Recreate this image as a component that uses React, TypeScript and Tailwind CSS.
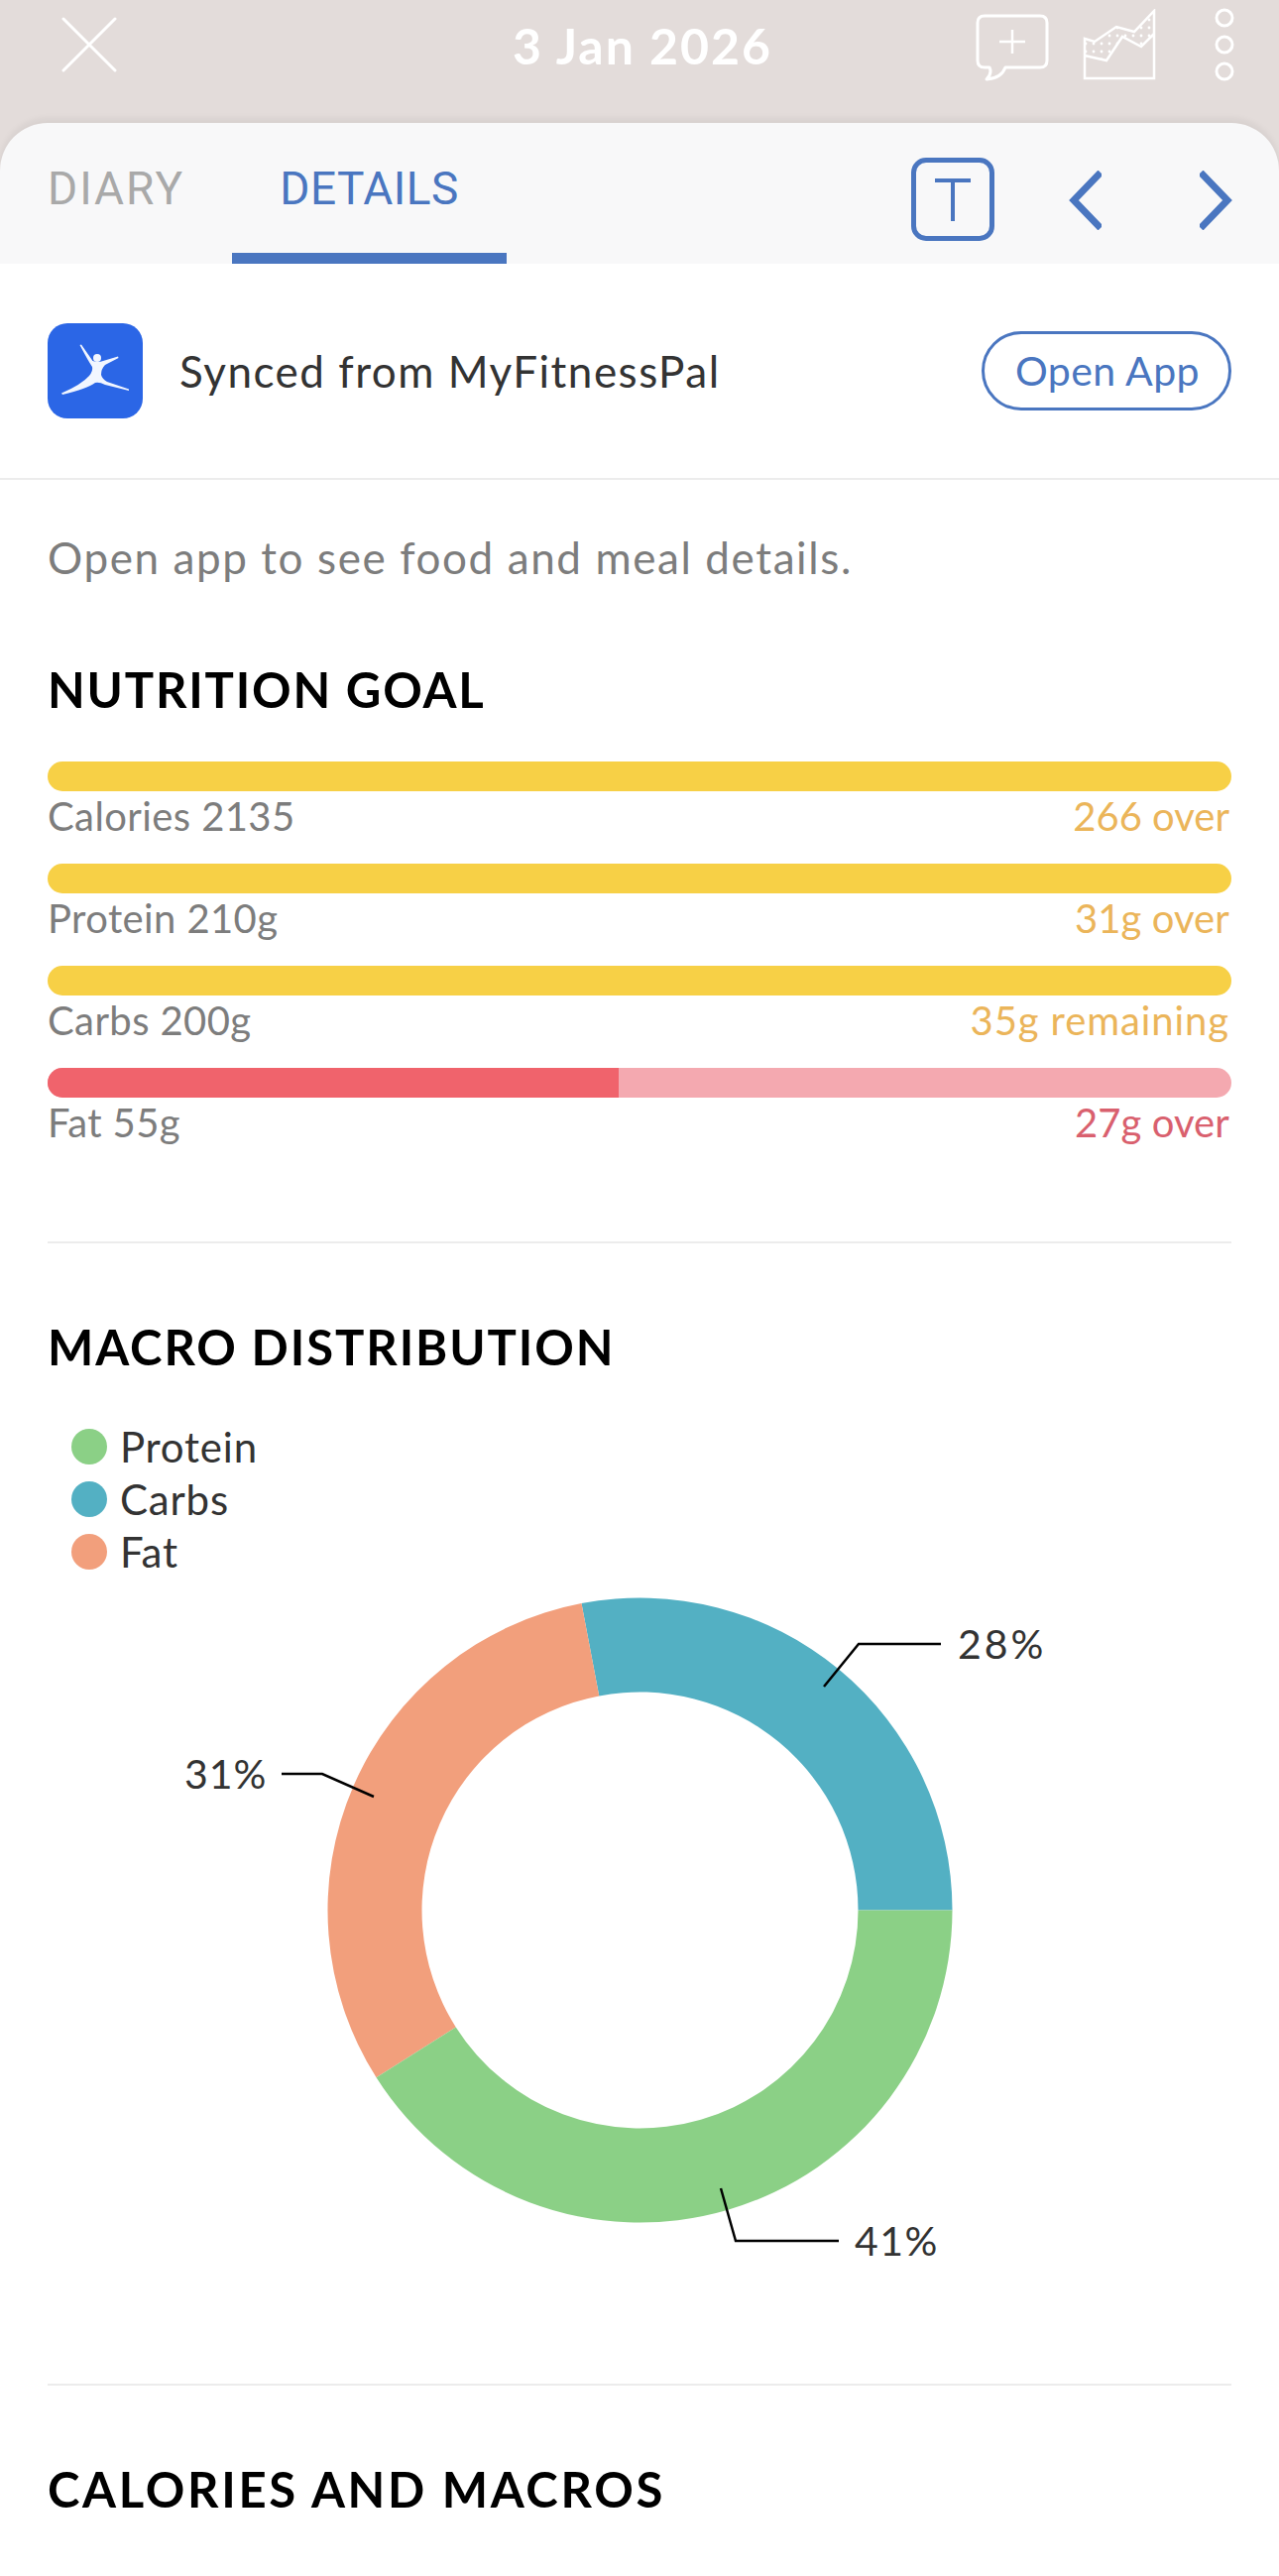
import React from 'react';

const sans = "font-['Lato','Liberation_Sans',sans-serif]";

const goals = [
  { label: 'Calories 2135', note: '266 over', tone: 'text-[#ebb55a] tracking-[0px]', fill: 'bg-[#f7d046]', width: '100%' },
  { label: 'Protein 210g', note: '31g over', tone: 'text-[#ebb55a] tracking-[0.1px]', fill: 'bg-[#f7d046]', width: '100%' },
  { label: 'Carbs 200g', note: '35g remaining', tone: 'text-[#ebb55a] tracking-[0.9px]', fill: 'bg-[#f7d046]', width: '100%' },
  { label: 'Fat 55g', note: '27g over', tone: 'text-[#d9606e] tracking-[0.1px]', fill: 'bg-[#f0636c]', width: '48.2%' },
];

const legend = [
  { label: 'Protein', color: 'bg-[#8bd086]' },
  { label: 'Carbs', color: 'bg-[#53b0c3]' },
  { label: 'Fat', color: 'bg-[#f29f7c]' },
];

// donut slice between two angles, measured counter-clockwise from east
function slice(from: number, to: number) {
  const cx = 645.5;
  const cy = 1926.5;
  const R = 315;
  const r = 220;
  const pt = (rad: number, deg: number) => {
    const a = (deg * Math.PI) / 180;
    return `${(cx + rad * Math.cos(a)).toFixed(2)} ${(cy - rad * Math.sin(a)).toFixed(2)}`;
  };
  const large = to - from > 180 ? 1 : 0;
  return `M${pt(R, from)} A${R} ${R} 0 ${large} 0 ${pt(R, to)} L${pt(r, to)} A${r} ${r} 0 ${large} 1 ${pt(r, from)} Z`;
}

function TopBar() {
  return (
    <div className="flex h-[124px] items-start justify-between bg-[#e3dcda] pl-[62px] pr-[45px]">
      <svg width="56" height="56" viewBox="0 0 56 56" className="mt-[17px]" stroke="#fff" strokeWidth="3" strokeLinecap="round">
        <path d="M2 2 L54 54 M54 2 L2 54" />
      </svg>
      <div className="mt-[16px] ml-[194px] text-[50px] leading-[60px] font-bold tracking-[2px] text-white">3 Jan 2026</div>
      <div className="flex items-start">
        <svg width="74" height="68" viewBox="0 0 74 68" className="mt-[14px]" fill="none" stroke="#fff" strokeWidth="3" strokeLinejoin="round">
          <path d="M9 2 H65 Q72 2 72 9 V47 Q72 54 65 54 H30 Q26 65 11 66 Q17 60 14 54 H9 Q2 54 2 47 V9 Q2 2 9 2 Z" />
          <path d="M37 16 V40 M24 28 H50" strokeWidth="2.5" />
        </svg>
        <svg width="74" height="72" viewBox="0 0 74 72" className="mt-[9px] ml-[34px]" fill="none">
          <defs>
            <pattern id="dots" width="8" height="8" patternUnits="userSpaceOnUse">
              <circle cx="3" cy="3" r="1.4" fill="#fff" />
            </pattern>
          </defs>
          <path d="M2 30 L12 33 L34 18 L52 23 L72 1 V25 L59 38 L40 28 L24 52 L2 47 Z" fill="url(#dots)" />
          <path d="M2 30 L12 33 L34 18 L52 23 L72 2 V70 H2 Z M2 47 L24 52 L40 28 L59 38 L72 25" stroke="#fff" strokeWidth="2.5" />
        </svg>
        <svg width="20" height="74" viewBox="0 0 20 74" className="mt-[8px] ml-[59px]" fill="none" stroke="#fff" strokeWidth="3">
          <circle cx="10" cy="10" r="8" />
          <circle cx="10" cy="37" r="8" />
          <circle cx="10" cy="64" r="8" />
        </svg>
      </div>
    </div>
  );
}

function TabBar() {
  return (
    <div className="bg-[#e3dcda]">
      <div className="flex h-[142px] items-start rounded-t-[48px] bg-[#f8f8f9] shadow-[0_-5px_6px_rgba(0,0,0,0.05)]">
        <div className="mt-[40px] ml-[48px] w-[137px] font-['Roboto',sans-serif] text-[46px] leading-[52px] font-normal tracking-[2px] text-[#a9a9a9]">DIARY</div>
        <div className="ml-[49px] flex h-[142px] w-[277px] flex-col items-center justify-between">
          <div className="mt-[40px] font-['Roboto',sans-serif] text-[46px] leading-[52px] font-normal tracking-[0.5px] text-[#4a76c0]">DETAILS</div>
          <div className="h-[11px] w-full bg-[#4a76c0]" />
        </div>
        <div className="mt-[35px] ml-auto flex items-start pr-[46px]">
          <div className="flex h-[84px] w-[84px] items-center justify-center rounded-[15px] border-[5px] border-[#4a76c0]">
            <svg width="36" height="44" viewBox="0 0 36 44" fill="none" stroke="#4a76c0" strokeWidth="4">
              <path d="M0 3 H36 M18 3 V44" />
            </svg>
          </div>
          <svg width="34" height="60" viewBox="0 0 34 60" className="mt-[13px] ml-[74px]" fill="none" stroke="#4a76c0" strokeWidth="7">
            <path d="M33 2 L6 30 L33 58" strokeLinecap="butt" />
          </svg>
          <svg width="34" height="60" viewBox="0 0 34 60" className="mt-[13px] ml-[99px]" fill="none" stroke="#4a76c0" strokeWidth="7">
            <path d="M1 2 L28 30 L1 58" strokeLinecap="butt" />
          </svg>
        </div>
      </div>
    </div>
  );
}

function SyncRow() {
  return (
    <div className="flex h-[218px] items-center border-b-2 border-[#ececec] pr-[48px] pl-[48px]">
      <div className="h-[96px] w-[96px] rounded-[20px] bg-[#2b66e6]">
        <svg width="96" height="96" viewBox="0 0 96 96" fill="#f2f6ff">
          <path d="M32.5 22 L34 21.5 L45.5 38 Q51 40 56 38 L71 33.5 L71.5 35 L58 42 Q54 46 54 52 Q55 56 60 59 L82 66.5 L82 68 L58 62 Q52 59 48 60 Q40 66 15 72 L14 70.5 Q34 62 42 53 Q46 48 45 44 Q41 38 32.5 22 Z" />
          <circle cx="50" cy="35" r="4" />
        </svg>
      </div>
      <div className={`${sans} ml-[37px] text-[44px] tracking-[1.5px] text-[#333]`}>Synced from MyFitnessPal</div>
      <div className={`${sans} ml-auto flex h-[80px] w-[252px] items-center justify-center rounded-full border-[3px] border-[#4a76c0] pl-[2px] text-[41px] tracking-[0.4px] text-[#4a76c0]`}>
        Open App
      </div>
    </div>
  );
}

function GoalBar({ label, note, tone, fill, width }: (typeof goals)[number]) {
  return (
    <div className="h-[103px]">
      <div className="h-[30px] w-full overflow-hidden rounded-full bg-[#f4a9b0]">
        <div className={`h-full ${fill}`} style={{ width }} />
      </div>
      <div className={`${sans} flex justify-between pr-[2px] text-[40px] leading-[50px]`}>
        <span className="tracking-[0.4px] text-[#7d7d7d]">{label}</span>
        <span className={tone}>{note}</span>
      </div>
    </div>
  );
}

export default function App() {
  return (
    <div className={`${sans} h-[2598px] w-[1290px] overflow-hidden bg-white`}>
      <TopBar />
      <TabBar />
      <SyncRow />
      <div className="px-[48px]">
        <div className="mt-[48px] text-[44px] leading-[60px] tracking-[1.6px] text-[#7d7d7d]">Open app to see food and meal details.</div>
        <div className="mt-[73px] text-[49px] leading-[60px] font-bold tracking-[1.8px] text-black">NUTRITION GOAL</div>
        <div className="mt-[43px]">
          {goals.map((g) => (
            <GoalBar key={g.label} {...g} />
          ))}
        </div>
        <div className="mt-[72px] h-[2px] bg-[#ececec]" />
        <div className="mt-[74px] text-[49px] leading-[60px] font-bold tracking-[1.9px] text-black">MACRO DISTRIBUTION</div>
        <div className="mt-[53px] ml-[24px] flex flex-col gap-[17px]">
          {legend.map((l) => (
            <div key={l.label} className="flex h-[36px] items-center gap-[13px]">
              <span className={`h-[36px] w-[36px] rounded-full ${l.color}`} />
              <span className="text-[42px] leading-[36px] tracking-[0.8px] text-[#333]">{l.label}</span>
            </div>
          ))}
        </div>
      </div>
      <svg width="1290" height="814" viewBox="0 1590 1290 814" className="mt-[7px] block">
        <path d={slice(0, 100.8)} fill="#53b0c3" />
        <path d={slice(100.8, 212.4)} fill="#f29f7c" />
        <path d={slice(212.4, 360)} fill="#8bd086" />
        <g fill="none" stroke="#000" strokeWidth="2.5">
          <path d="M831 1701 L866 1658 H949" />
          <path d="M377 1812 L325 1789 H284" />
          <path d="M727 2207 L742 2260 H846" />
        </g>
        <g fontFamily="Lato, sans-serif" fontSize="41" fill="#333">
          <text x="966" y="1673" letterSpacing="3">28%</text>
          <text x="186" y="1804" letterSpacing="1">31%</text>
          <text x="862" y="2275" letterSpacing="1.5">41%</text>
        </g>
      </svg>
      <div className="mx-[48px] h-[2px] bg-[#ececec]" />
      <div className="mt-[74px] px-[48px] text-[49px] leading-[60px] font-bold tracking-[2.7px] text-black">CALORIES AND MACROS</div>
    </div>
  );
}
